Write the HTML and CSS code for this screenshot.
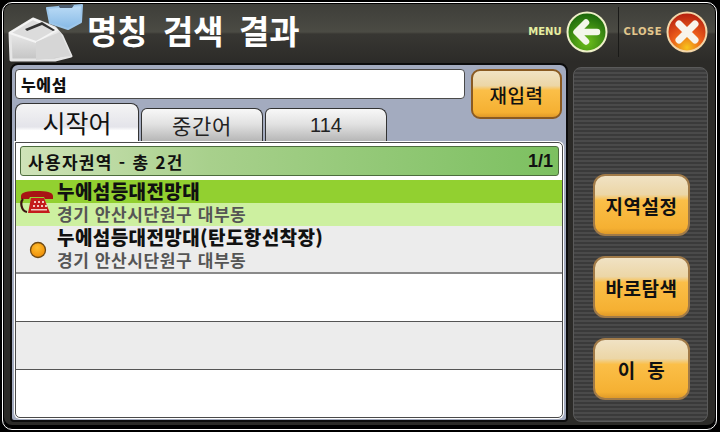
FILE: index.html
```html
<!DOCTYPE html>
<html lang="ko">
<head>
<meta charset="utf-8">
<title>명칭 검색 결과</title>
<link rel="stylesheet" href="styles.css">
</head>
<body>
<div class="device">
  <div class="bezel">
    <svg class="logo" width="84" height="62" viewBox="4 4 84 62">
      <defs>
        <linearGradient id="kw" x1="0" y1="0" x2="0" y2="1"><stop offset="0" stop-color="#fbfbfb"/><stop offset="1" stop-color="#c4c4c4"/></linearGradient>
        <linearGradient id="kb" x1="0" y1="0" x2="0" y2="1"><stop offset="0" stop-color="#bcdcf6"/><stop offset="1" stop-color="#86b9e6"/></linearGradient>
      </defs>
      <path d="M47 8 L82 5 L81 22 L68 29 L50 23 Z" fill="url(#kb)" stroke="#9cc6ea" stroke-width="2" stroke-linejoin="round"/>
      <path d="M58 5 H74 L72 8 H60 Z" fill="#4a5a6c"/>
      <path d="M10 33 L33 19 L55 28 L62 36 L71 56 L55 60 L11 60 Z" fill="url(#kw)" stroke="#e6e6e6" stroke-width="3" stroke-linejoin="round"/>
      <path d="M10 33 L33 19 L57 30 L36 42 Z" fill="#dcdcdc" stroke="#f4f4f4" stroke-width="2" stroke-linejoin="round"/>
      <path d="M36 42 L60 32 L71 56 L36 60 Z" fill="#d6d6d6"/>
      <path d="M25 29 L42 22 L55 30 L53 31 L42 25 L27 31 Z" fill="#333"/>
    </svg>
    <header class="topbar">
      <h1 class="title">명칭 검색 결과</h1>
      <div class="actions">
        <span class="action-label menu-label">MENU</span>
        <svg class="round" width="42" height="42" viewBox="0 0 42 42">
          <defs>
            <radialGradient id="gg" cx="50%" cy="75%" r="70%"><stop offset="0" stop-color="#6fc01c"/><stop offset="1" stop-color="#1d6a0c"/></radialGradient>
          </defs>
          <circle cx="21" cy="21" r="19.5" fill="url(#gg)" stroke="#eef0c8" stroke-width="2"/>
          <path d="M31 21 H13 M20 11.5 L10.5 21 L20 30.5" fill="none" stroke="#f4f7ea" stroke-width="6.5" stroke-linecap="round" stroke-linejoin="round"/>
        </svg>
        <span class="divider"></span>
        <span class="action-label close-label">CLOSE</span>
        <svg class="round" width="42" height="42" viewBox="0 0 42 42">
          <defs>
            <radialGradient id="rg" cx="50%" cy="90%" r="85%"><stop offset="0" stop-color="#f7c41c"/><stop offset=".5" stop-color="#ea5a1a"/><stop offset="1" stop-color="#b8230f"/></radialGradient>
          </defs>
          <circle cx="21" cy="21" r="19.5" fill="url(#rg)" stroke="#f3d6a8" stroke-width="2"/>
          <path d="M13 13 L29 29 M29 13 L13 29" fill="none" stroke="#f8f4ec" stroke-width="7" stroke-linecap="round"/>
        </svg>
      </div>
    </header>
    <div class="content">
      <main class="panel">
        <div class="search-row">
          <div class="left-col">
            <div class="search-input">누에섬</div>
            <nav class="tabs">
              <span class="tab tab-active">시작어</span>
              <span class="tab">중간어</span>
              <span class="tab tab-num">114</span>
            </nav>
          </div>
          <button class="btn btn-retype">재입력</button>
        </div>
        <section class="results">
          <div class="result-head"><span>사용자권역 - 총 2건</span><span class="page">1/1</span></div>
          <div class="row row-selected">
            <svg class="row-icon" width="34" height="26" viewBox="0 0 34 26">
              <path d="M1 8 C1 4 8 3 17 3 C26 3 33 4 33 8 L33 11 H25 L24 9 H10 L9 11 H1 Z" fill="#a81414"/>
              <path d="M3 11 C0 14 1 23 7 24" fill="none" stroke="#3a1410" stroke-width="2.2"/>
              <path d="M11 10 H24 L30 25 H8 Z" fill="#c41c1c"/>
              <g fill="#f0c8c0"><rect x="14" y="13" width="2" height="2"/><rect x="18" y="13" width="2" height="2"/><rect x="22" y="13" width="2" height="2"/><rect x="13" y="17" width="2" height="2"/><rect x="17" y="17" width="2" height="2"/><rect x="21" y="17" width="2" height="2"/><rect x="25" y="17" width="2" height="2"/><rect x="11" y="21" width="16" height="1.5"/></g>
            </svg>
            <div class="row-name">누에섬등대전망대</div>
            <div class="row-addr">경기 안산시단원구 대부동</div>
          </div>
          <div class="row row-gray">
            <svg class="row-icon" width="34" height="26" viewBox="0 0 34 26">
              <defs><radialGradient id="og" cx="45%" cy="35%" r="65%"><stop offset="0" stop-color="#ffbf30"/><stop offset="1" stop-color="#ee8c06"/></radialGradient></defs>
              <circle cx="19" cy="13" r="7.5" fill="url(#og)" stroke="#6e4a14" stroke-width="1.3"/>
            </svg>
            <div class="row-name">누에섬등대전망대(탄도항선착장)</div>
            <div class="row-addr">경기 안산시단원구 대부동</div>
          </div>
          <div class="row row-empty"></div>
          <div class="row row-empty row-shade"></div>
          <div class="row row-empty row-last"></div>
        </section>
      </main>
      <aside class="side">
        <button class="btn btn-side">지역설정</button>
        <button class="btn btn-side">바로탐색</button>
        <button class="btn btn-side">이&nbsp;&nbsp;동</button>
      </aside>
    </div>
  </div>
</div>
</body>
</html>
```
FILE: styles.css
```css
* { box-sizing: border-box; }
html, body { margin: 0; padding: 0; }
body {
  width: 720px; height: 432px; overflow: hidden; background: #000;
  font-family: "Noto Sans CJK KR", "Liberation Sans", sans-serif;
}
.device {
  width: 715px; height: 428px; margin: 2px 0 0 2px;
  border: 1px solid #fff; border-radius: 10px; background: #000; padding: 1px;
}
.bezel {
  position: relative; height: 100%; border-radius: 8px; padding: 0 7px 6px 6px;
  background: linear-gradient(#3e3e39 0, #4b4b44 28px, #383733 30px, #2c2b28 58px);
  box-shadow: inset 0 -3px #000;
  display: flex; flex-direction: column;
}
.logo { position: absolute; left: 0; top: 0; }
.topbar { height: 59px; display: flex; align-items: flex-start; justify-content: space-between; flex: none; }
.title {
  margin: 4px 0 0 77px; color: #fff; font-size: 33px; line-height: 44px; font-weight: 700;
  letter-spacing: 0; word-spacing: 6px; white-space: nowrap;
}
.actions { display: flex; align-items: center; height: 42px; margin-top: 7px; }
.action-label { font: 700 10px/12px "DejaVu Sans", sans-serif; margin-right: 4px; }
.menu-label { color: #e6eda0; }
.close-label { color: #e2c68c; letter-spacing: .5px; }
.round { flex: none; }
.divider { width: 1px; height: 50px; background: #1a1a18; margin: 0 5px 0 10px; }
.content { display: flex; flex: 1; min-height: 0; gap: 5px; }
.panel {
  width: 558px; background: #a3abbf; border: 2px solid #0c0c0c; border-radius: 8px 8px 4px 4px;
  padding: 4px 3px 2px 3px; display: flex; flex-direction: column;
}
.search-row { display: flex; gap: 6px; flex: none; height: 73px; }
.left-col { width: 450px; display: flex; flex-direction: column; }
.search-input {
  height: 30px; background: #fff; border: 1px solid #4a4a4a; border-radius: 4px;
  padding-left: 5px; font-size: 16px; font-weight: 900; letter-spacing: .6px; line-height: 28px; color: #111;
}
.tabs { display: flex; gap: 2px; margin-top: 4px; align-items: flex-end; height: 39px; }
.tab {
  width: 122px; height: 34px; border: 1px solid #333; border-bottom: 0; border-radius: 6px 8px 0 0;
  background: linear-gradient(#f8f8f8, #e2e2e2 45%, #b4b4b4);
  text-align: center; font-size: 21px; letter-spacing: .6px; line-height: 33px; color: #222;
}
.tab-num { font-family: "Liberation Sans", sans-serif; font-size: 20px; letter-spacing: 0; }
.tab-active {
  width: 124px; height: 39px; background: linear-gradient(#f4f4f4, #e4e4ea 60%, #fff 70%);
  font-size: 25px; letter-spacing: 0; line-height: 37px; color: #111; border-radius: 8px 8px 0 0;
}
.btn {
  display: block; padding: 0; border: 2px solid #8a5a22; background: linear-gradient(#f0e2c4 0, #ecd6a6 32%, #fbbf48 42%, #f5b032 90%, #e09a28);
  font-family: "Noto Sans CJK KR", sans-serif; font-weight: 700; color: #111;
}
.btn-retype { width: 91px; height: 50px; border-radius: 9px; font-size: 19px; letter-spacing: .5px; font-weight: 500; }
.results {
  flex: 1; min-height: 0; background: #fff; border: 1px solid #4a4a4a; border-radius: 0 5px 5px 5px;
  box-shadow: 0 0 0 1px #fff; padding: 3px 0 0 0;
  display: flex; flex-direction: column;
}
.result-head {
  margin: 0 3px 0 4px; height: 30px; flex: none; display: flex; justify-content: space-between; align-items: center;
  padding: 0 5px 0 7px; border: 1px solid #4d6d3d; border-radius: 3px; font-size: 17px; letter-spacing: 1.3px; font-weight: 700; color: #111;
  background: linear-gradient(90deg, #cfe3b8, #a8d08c 35%, #7cc060 100%);
}
.page { letter-spacing: 0; font-size: 18px; font-family: "Liberation Sans", sans-serif; }
.row { position: relative; flex: none; height: 48px; border-bottom: 1px solid #555; }
.row-selected {
  margin-top: 4px; height: 46px; border-bottom: 0;
  background: linear-gradient(#92d030 0, #92d030 23px, #cdf0a0 23px, #cdf0a0 100%);
}
.row-gray { background: #ececec; border-bottom: 2px solid #8a8a8a; }
.row-shade { background: #ececec; }
.row-last { border-bottom: 0; height: 47px; }
.row-icon { position: absolute; left: 4px; top: 8px; }
.row-gray .row-icon { left: 3px; top: 11px; }
.row-name { margin-left: 41px; font-size: 19px; letter-spacing: .4px; line-height: 22px; font-weight: 900; color: #111; white-space: nowrap; }
.row-addr { margin-left: 41px; font-size: 17px; letter-spacing: .6px; line-height: 24px; font-weight: 700; color: #555; white-space: nowrap; }
.side {
  width: 135px; margin-top: 4px; border: 1px solid #5a5a5a; border-radius: 8px;
  background: repeating-linear-gradient(#4a4a4a 0, #4a4a4a 2px, #3a3a3a 2px, #3a3a3a 4px);
  display: flex; flex-direction: column; align-items: center; padding: 106px 0 0 2px; gap: 20px;
}
.btn-side { width: 97px; height: 62px; border-color: #a07a48; border-radius: 12px; font-size: 19px; letter-spacing: .5px; }
```
